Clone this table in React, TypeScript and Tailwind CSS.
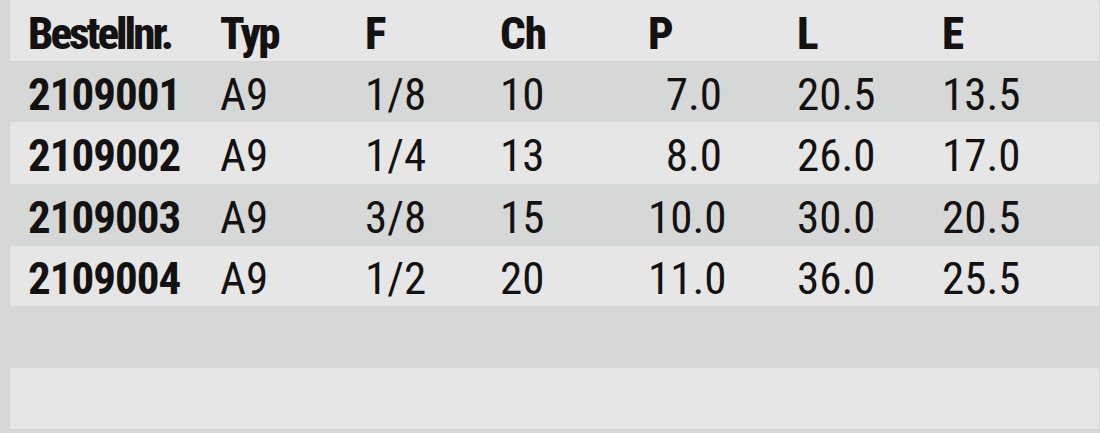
const rows = [
  { nr: '2109001', typ: 'A9', f: '1/8', ch: '10', p: '7.0', l: '20.5', e: '13.5' },
  { nr: '2109002', typ: 'A9', f: '1/4', ch: '13', p: '8.0', l: '26.0', e: '17.0' },
  { nr: '2109003', typ: 'A9', f: '3/8', ch: '15', p: '10.0', l: '30.0', e: '20.5' },
  { nr: '2109004', typ: 'A9', f: '1/2', ch: '20', p: '11.0', l: '36.0', e: '25.5' },
]

const cols = 'grid grid-cols-[192px_145px_135px_148px_149px_145px_1fr] items-center'

function Row({ light, h, children }: { light: boolean; h: string; children?: React.ReactNode }) {
  return (
    <div
      className={
        light
          ? `ml-[10px] mr-[1px] pl-[18px] pt-[5px] bg-[#e6e6e6] rounded-[2px] ${h} ${cols}`
          : `pl-[28px] pt-[5px] ${h} ${cols}`
      }
    >
      {children}
    </div>
  )
}

export default function App() {
  return (
    <div className="w-[1100px] h-[433px] bg-[#d6d8d7] flex flex-col text-[#141210] text-[45px] leading-none overflow-hidden font-['Roboto',sans-serif] [font-stretch:condensed]">
      <Row light h="h-[61px]">
        <div className="font-extrabold tracking-[-3px]">Bestellnr.</div>
        <div className="font-extrabold tracking-[-2.5px]">Typ</div>
        <div className="font-extrabold">F</div>
        <div className="font-extrabold tracking-[-1px]">Ch</div>
        <div className="font-extrabold">P</div>
        <div className="font-extrabold">L</div>
        <div className="font-extrabold">E</div>
      </Row>
      {rows.map((r, i) => (
        <Row key={r.nr} light={i % 2 === 1} h={i === 1 || i === 2 ? 'h-[62px]' : i === 3 ? 'h-[60px]' : 'h-[61px]'}>
          <div className="font-bold tracking-[-1px]">{r.nr}</div>
          <div>{r.typ}</div>
          <div>{r.f}</div>
          <div>{r.ch}</div>
          <div className="w-[74px] text-right">{r.p}</div>
          <div>{r.l}</div>
          <div>{r.e}</div>
        </Row>
      ))}
      <Row light={false} h="h-[62px]" />
      <Row light h="h-[61px]" />
    </div>
  )
}
